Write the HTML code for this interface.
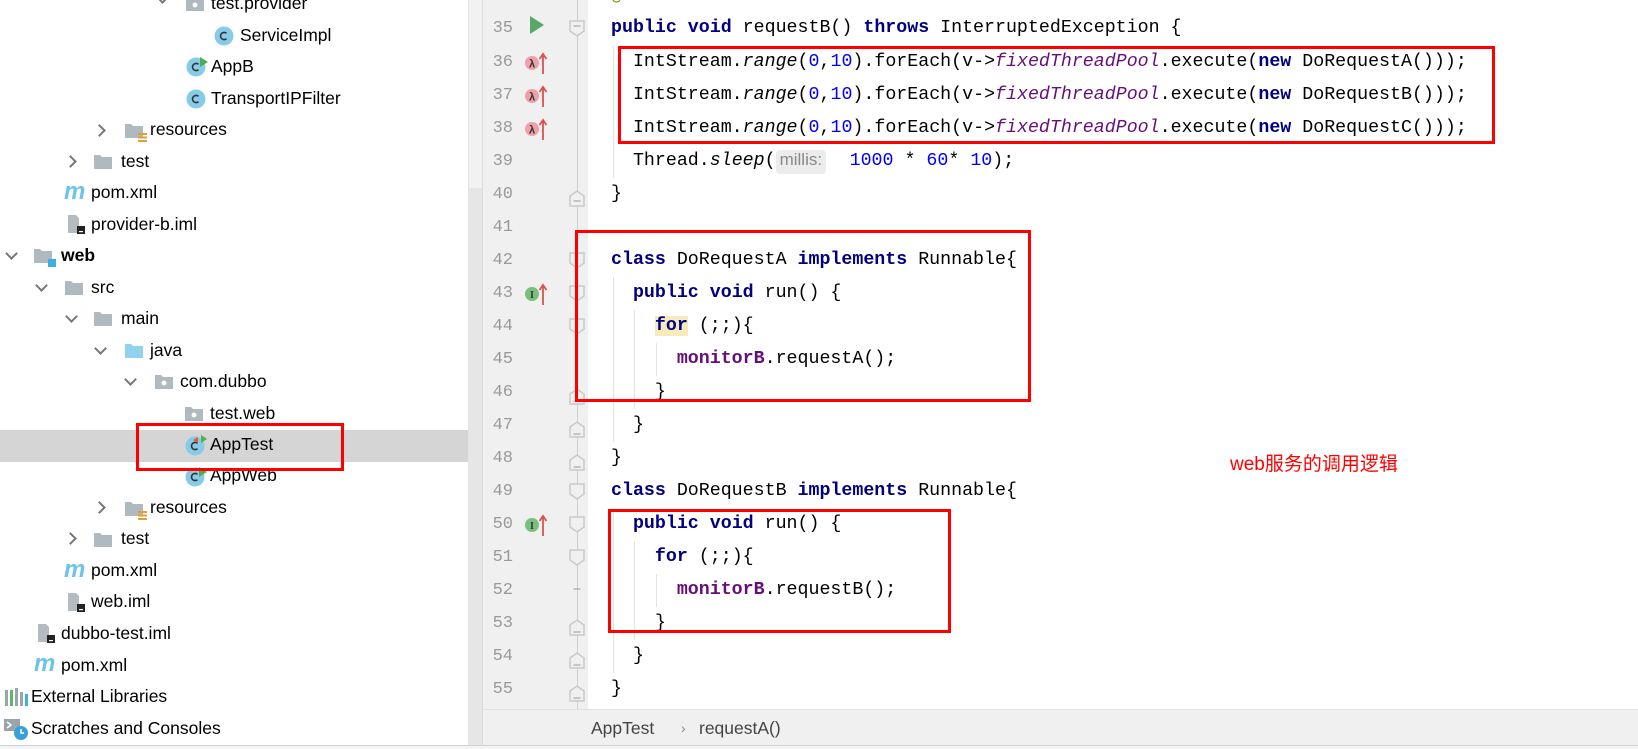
<!DOCTYPE html>
<html><head><meta charset="utf-8">
<style>
*{margin:0;padding:0;box-sizing:border-box}
body{width:1638px;height:749px;overflow:hidden;background:#fff;position:relative;font-family:"Liberation Sans","Noto Sans CJK SC",sans-serif}
.a{position:absolute}
.tr{position:absolute;height:31px;line-height:31px;font-size:17.5px;color:#000;white-space:nowrap}
.chev{position:absolute;width:9px;height:9px;border-right:2px solid #777;border-bottom:2px solid #777}
.cd{transform:rotate(45deg)}
.cr{transform:rotate(-45deg)}
.fold{position:absolute;width:13px;height:13px;left:571px;border:1.5px solid #c9c9c9;background:#f0f0f0}
.code{position:absolute;left:611px;font-family:"Liberation Mono",monospace;font-size:18.3px;white-space:pre;color:#000;height:33px;line-height:33px}
.k{color:#000080;font-weight:bold}
.n{color:#0000ff}
.f{color:#660e7a;font-style:italic}
.m{color:#660e7a;font-weight:bold}
.i{font-style:italic}
.ln{position:absolute;left:480px;width:33px;text-align:right;font-family:"Liberation Mono",monospace;font-size:17px;color:#999;height:33px;line-height:33px}
.box{position:absolute;border:3px solid #f00}
.guide{position:absolute;width:1px;background:#e2e2e2}
</style></head><body>

<!-- left panel -->
<div class="a" style="left:0;top:430px;width:468px;height:32px;background:#d5d5d5"></div>
<div class="a" style="left:468px;top:0;width:15px;height:745px;background:#f2f2f2;border-left:1px solid #e4e4e4;border-right:1px solid #dcdcdc"></div>
<div class="a" style="left:469px;top:188px;width:13px;height:557px;background:#e6e6e6"></div>

<svg class="a" style="left:0;top:0" width="468" height="745">
<defs>
<g id="fold"><path d="M0 2h6l2 2h10v12H0z" fill="#aeb9c0"/></g>
<g id="pkg"><path d="M0 2h6l2 2h10v12H0z" fill="#aeb9c0"/><circle cx="9" cy="10" r="2.5" fill="#fff"/></g>
<g id="cls"><circle cx="10" cy="10" r="9.5" fill="#87cbe8"/><path d="M12.5 7.3a3.6 3.6 0 1 0 0 5.4" stroke="#333" stroke-width="1.6" fill="none"/></g>
<g id="iml"><path d="M2 0h8l3 3v15H2z" fill="#b4bcc2"/><rect x="11" y="11" width="8" height="8" fill="#222"/><rect x="13" y="16" width="4" height="1.2" fill="#fff"/></g>
</defs>
<use href="#pkg" x="186" y="-5"/>
<use href="#cls" x="214" y="26"/>
<use href="#cls" x="186" y="57"/><path d="M200 57l8 5-8 5z" fill="#4caf50"/>
<use href="#cls" x="186" y="89"/>
<use href="#fold" x="125" y="122"/><g fill="#e0a030"><rect x="138" y="133" width="9" height="2"/><rect x="138" y="136.5" width="9" height="2"/><rect x="138" y="140" width="9" height="2"/></g>
<use href="#fold" x="94" y="153"/>
<use href="#iml" x="66" y="215"/>
<use href="#fold" x="34" y="247"/><rect x="48" y="259" width="8" height="8" fill="#3cb0e0"/>
<use href="#fold" x="65" y="279"/>
<use href="#fold" x="94" y="310"/>
<path d="M125 344h6l2 2h10v12h-18z" fill="#8fd3ee"/>
<use href="#pkg" x="155" y="373"/>
<use href="#pkg" x="185" y="405"/>
<use href="#cls" x="185" y="436"/><path d="M198 437l-5 3 5 3z" fill="#e06030"/><path d="M201 435l6 4-6 4z" fill="#4caf50"/>
<use href="#cls" x="185" y="467"/><path d="M199 467l8 5-8 5z" fill="#4caf50"/>
<use href="#fold" x="125" y="500"/><g fill="#e0a030"><rect x="138" y="511" width="9" height="2"/><rect x="138" y="514.5" width="9" height="2"/><rect x="138" y="518" width="9" height="2"/></g>
<use href="#fold" x="94" y="531"/>
<use href="#iml" x="66" y="593"/>
<use href="#iml" x="36" y="624"/>
<g fill="#9aa4aa"><rect x="5" y="690" width="3" height="16"/><rect x="15" y="688" width="3" height="18"/><rect x="20" y="692" width="3" height="14"/></g><rect x="10" y="690" width="3" height="16" fill="#5cb85c"/><rect x="25" y="694" width="3" height="12" fill="#3cb0e0"/>
<rect x="4" y="719" width="16" height="12" fill="#9aa4aa"/><path d="M7 722l4 3-4 3" stroke="#fff" stroke-width="1.5" fill="none"/><circle cx="21" cy="733" r="7" fill="#3aa0d8"/><path d="M21 729v4h3" stroke="#fff" stroke-width="1.5" fill="none"/>
</svg>
<div class="a" style="left:64px;top:178px;font:italic bold 24px 'Liberation Sans',sans-serif;color:#6cc4e8">m</div>
<div class="a" style="left:64px;top:556px;font:italic bold 24px 'Liberation Sans',sans-serif;color:#6cc4e8">m</div>
<div class="a" style="left:34px;top:650px;font:italic bold 24px 'Liberation Sans',sans-serif;color:#6cc4e8">m</div>

<div class="chev cd" style="left:158px;top:-7px"></div>
<div class="chev cr" style="left:95px;top:126px"></div>
<div class="chev cr" style="left:66px;top:157px"></div>
<div class="chev cd" style="left:7px;top:249px"></div>
<div class="chev cd" style="left:37px;top:281px"></div>
<div class="chev cd" style="left:67px;top:312px"></div>
<div class="chev cd" style="left:96px;top:344px"></div>
<div class="chev cd" style="left:126px;top:375px"></div>
<div class="chev cr" style="left:95px;top:503px"></div>
<div class="chev cr" style="left:66px;top:534px"></div>

<div class="tr" style="left:211px;top:-12px">test.provider</div>
<div class="tr" style="left:240px;top:20px">ServiceImpl</div>
<div class="tr" style="left:211px;top:51px">AppB</div>
<div class="tr" style="left:211px;top:83px">TransportIPFilter</div>
<div class="tr" style="left:150px;top:114px">resources</div>
<div class="tr" style="left:121px;top:146px">test</div>
<div class="tr" style="left:91px;top:177px">pom.xml</div>
<div class="tr" style="left:91px;top:209px">provider-b.iml</div>
<div class="tr" style="left:61px;top:240px;font-weight:bold">web</div>
<div class="tr" style="left:91px;top:272px">src</div>
<div class="tr" style="left:121px;top:303px">main</div>
<div class="tr" style="left:150px;top:335px">java</div>
<div class="tr" style="left:180px;top:366px">com.dubbo</div>
<div class="tr" style="left:210px;top:398px">test.web</div>
<div class="tr" style="left:210px;top:429px">AppTest</div>
<div class="tr" style="left:210px;top:460px">AppWeb</div>
<div class="tr" style="left:150px;top:492px">resources</div>
<div class="tr" style="left:121px;top:523px">test</div>
<div class="tr" style="left:91px;top:555px">pom.xml</div>
<div class="tr" style="left:91px;top:586px">web.iml</div>
<div class="tr" style="left:61px;top:618px">dubbo-test.iml</div>
<div class="tr" style="left:61px;top:650px">pom.xml</div>
<div class="tr" style="left:31px;top:681px">External Libraries</div>
<div class="tr" style="left:31px;top:713px">Scratches and Consoles</div>

<!-- gutter -->
<div class="a" style="left:483px;top:0;width:105px;height:709px;background:#f0f0f0"></div>
<div class="a" style="left:577px;top:0;width:1px;height:709px;background:#d0d0d0"></div>

<div class="ln" style="top:-20px">34</div>
<div class="ln" style="top:12px">35</div>
<div class="ln" style="top:46px">36</div>
<div class="ln" style="top:79px">37</div>
<div class="ln" style="top:112px">38</div>
<div class="ln" style="top:145px">39</div>
<div class="ln" style="top:178px">40</div>
<div class="ln" style="top:211px">41</div>
<div class="ln" style="top:244px">42</div>
<div class="ln" style="top:277px">43</div>
<div class="ln" style="top:310px">44</div>
<div class="ln" style="top:343px">45</div>
<div class="ln" style="top:376px">46</div>
<div class="ln" style="top:409px">47</div>
<div class="ln" style="top:442px">48</div>
<div class="ln" style="top:475px">49</div>
<div class="ln" style="top:508px">50</div>
<div class="ln" style="top:541px">51</div>
<div class="ln" style="top:574px">52</div>
<div class="ln" style="top:607px">53</div>
<div class="ln" style="top:640px">54</div>
<div class="ln" style="top:673px">55</div>

<svg class="a" style="left:520px;top:0" width="40" height="709">
<path d="M10 16l14 9-14 9z" fill="#59a869"/>
<g id="lam"><circle cx="12" cy="63" r="7" fill="#f0a0a8"/><text x="12" y="67.5" font-size="11" font-weight="bold" text-anchor="middle" fill="#333" font-family="Liberation Sans,sans-serif">λ</text><path d="M23 74V55M19.5 59l3.5-5 3.5 5" stroke="#d9534f" stroke-width="1.8" fill="none"/></g>
<use href="#lam" y="33"/><use href="#lam" y="66"/>
<g id="imp"><circle cx="12" cy="294" r="7" fill="#79c07d"/><text x="12" y="298" font-size="10" font-weight="bold" text-anchor="middle" fill="#333" font-family="Liberation Serif,serif">I</text><path d="M23 305V286M19.5 290l3.5-5 3.5 5" stroke="#d9534f" stroke-width="1.8" fill="none"/></g>
<use href="#imp" y="231"/>
</svg>

<svg class="a" style="left:568px;top:0" width="20" height="709">
<g fill="#f0f0f0" stroke="#c9c9c9" stroke-width="1.5">
<path d="M2 21h14v10l-7 5-7-5z"/>
<path d="M2 196l7-5 7 5v10H2z"/>
<path d="M2 253h14v10l-7 5-7-5z"/>
<path d="M2 286h14v10l-7 5-7-5z"/>
<path d="M2 319h14v10l-7 5-7-5z"/>
<path d="M2 394l7-5 7 5v10H2z"/>
<path d="M2 427l7-5 7 5v10H2z"/>
<path d="M2 460l7-5 7 5v10H2z"/>
<path d="M2 484h14v10l-7 5-7-5z"/>
<path d="M2 517h14v10l-7 5-7-5z"/>
<path d="M2 550h14v10l-7 5-7-5z"/>
<path d="M2 625l7-5 7 5v10H2z"/>
<path d="M2 658l7-5 7 5v10H2z"/>
<path d="M2 691l7-5 7 5v10H2z"/>
</g>
<g stroke="#aaa" stroke-width="1.3"><path d="M5.5 26h7M5.5 201h7M5.5 632h7M5.5 665h7M5.5 698h7M5.5 401h7M5.5 434h7M5.5 467h7M5.5 589h7"/></g>
</svg>

<!-- indent guides -->
<div class="guide" style="left:613px;top:46px;height:132px"></div>
<div class="guide" style="left:613px;top:277px;height:165px"></div>
<div class="guide" style="left:634px;top:310px;height:99px"></div>
<div class="guide" style="left:656px;top:343px;height:33px"></div>
<div class="guide" style="left:613px;top:508px;height:165px"></div>
<div class="guide" style="left:634px;top:541px;height:99px"></div>
<div class="guide" style="left:656px;top:574px;height:33px"></div>

<!-- code -->
<div class="code" style="top:-20px;color:#808000">@Test</div>
<div class="code" style="top:12px"><span class="k">public void</span> requestB() <span class="k">throws</span> InterruptedException {</div>
<div class="code" style="top:46px">  IntStream.<span class="i">range</span>(<span class="n">0</span>,<span class="n">10</span>).forEach(v-&gt;<span class="f">fixedThreadPool</span>.execute(<span class="k">new</span> DoRequestA()));</div>
<div class="code" style="top:79px">  IntStream.<span class="i">range</span>(<span class="n">0</span>,<span class="n">10</span>).forEach(v-&gt;<span class="f">fixedThreadPool</span>.execute(<span class="k">new</span> DoRequestB()));</div>
<div class="code" style="top:112px">  IntStream.<span class="i">range</span>(<span class="n">0</span>,<span class="n">10</span>).forEach(v-&gt;<span class="f">fixedThreadPool</span>.execute(<span class="k">new</span> DoRequestC()));</div>
<div class="code" style="top:145px">  Thread.<span class="i">sleep</span>(<span style="display:inline-block;width:74px;vertical-align:top"><span style="display:inline-block;margin-top:5px;height:24px;line-height:24px;background:#ececec;border-radius:4px;padding:0 4px;font:17px 'Liberation Sans',sans-serif;color:#888">millis:</span></span><span class="n">1000</span> * <span class="n">60</span>* <span class="n">10</span>);</div>
<div class="code" style="top:178px">}</div>
<div class="code" style="top:244px"><span class="k">class</span> DoRequestA <span class="k">implements</span> Runnable{</div>
<div class="code" style="top:277px">  <span class="k">public void</span> run() {</div>
<div class="code" style="top:310px">    <span class="k" style="background:#f6ebbc">for</span> (;;){</div>
<div class="code" style="top:343px">      <span class="m">monitorB</span>.requestA();</div>
<div class="code" style="top:376px">    }</div>
<div class="code" style="top:409px">  }</div>
<div class="code" style="top:442px">}</div>
<div class="code" style="top:475px"><span class="k">class</span> DoRequestB <span class="k">implements</span> Runnable{</div>
<div class="code" style="top:508px">  <span class="k">public void</span> run() {</div>
<div class="code" style="top:541px">    <span class="k">for</span> (;;){</div>
<div class="code" style="top:574px">      <span class="m">monitorB</span>.requestB();</div>
<div class="code" style="top:607px">    }</div>
<div class="code" style="top:640px">  }</div>
<div class="code" style="top:673px">}</div>

<!-- breadcrumb -->
<div class="a" style="left:483px;top:709px;width:1155px;height:36px;background:#f0f0f0;border-top:1px solid #e2e2e2"></div>
<div class="a" style="left:591px;top:716px;font-size:17.5px;color:#444;line-height:24px">AppTest</div>
<div class="a" style="left:681px;top:716px;font-size:14px;color:#888;line-height:24px">›</div>
<div class="a" style="left:699px;top:716px;font-size:17.5px;color:#444;line-height:24px">requestA()</div>
<div class="a" style="left:0;top:745px;width:1638px;height:4px;background:#d2d2d2"></div>
<div class="a" style="left:0;top:746px;width:1638px;height:3px;background:#f4f4f4"></div>

<!-- annotations -->
<div class="box" style="left:618px;top:46px;width:877px;height:98px"></div>
<div class="box" style="left:575px;top:230px;width:456px;height:172px"></div>
<div class="box" style="left:608px;top:509px;width:343px;height:124px"></div>
<div class="box" style="left:136px;top:423px;width:208px;height:48px"></div>
<div class="a" style="left:1230px;top:452px;font-size:19px;color:#f00;font-family:'Liberation Sans','Noto Sans CJK SC',sans-serif;line-height:26px">web服务的调用逻辑</div>
</body></html>
